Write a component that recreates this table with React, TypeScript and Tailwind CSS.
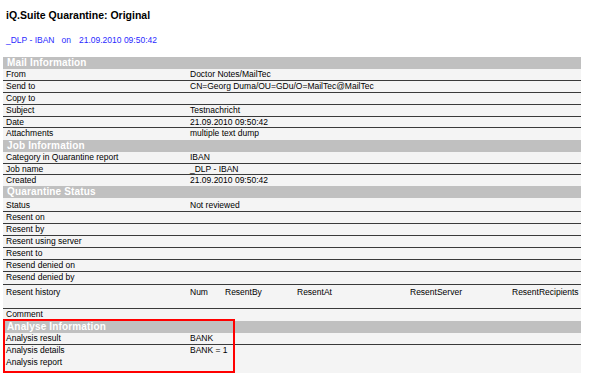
import React from "react";

type Row = { label: string; value?: string; border?: boolean; h?: string };

function Header({ title }: { title: string }) {
  return (
    <div className="h-[12px] bg-[#c0c0c0] pl-[4px] text-[10px] font-bold leading-[12px] tracking-[0.15px] text-white">
      {title}
    </div>
  );
}

function DataRow({ label, value, border = true, h = "h-[12px]" }: Row) {
  return (
    <div className={`flex ${h} ${border ? "border-b border-[#3a3a3a]" : ""}`}>
      <div className="w-[187px] shrink-0 pl-[3px] leading-[11px]">{label}</div>
      <div className="flex-1 leading-[11px]">{value}</div>
    </div>
  );
}

export default function App() {
  return (
    <div className="relative h-[373px] w-[600px] overflow-hidden bg-white font-['Liberation_Sans',Arial,sans-serif] text-black">
      <div className="pl-[6px] pt-[9px] text-[10.5px] font-bold leading-[12px]">iQ.Suite Quarantine: Original</div>
      <div className="flex pl-[6px] pt-[14px] text-[8.5px] leading-[11px] text-[#2a2aff]">
        <span>_DLP - IBAN</span>
        <span className="ml-[7px]">on</span>
        <span className="ml-[8px]">21.09.2010 09:50:42</span>
      </div>
      <div className="ml-[3px] mt-[11px] flex h-[320px] w-[578px] flex-col bg-[#f4f4f4] text-[8.5px]">
        <Header title="Mail Information" />
        <DataRow label="From" value="Doctor Notes/MailTec" />
        <DataRow label="Send to" value="CN=Georg Duma/OU=GDu/O=MailTec@MailTec" />
        <DataRow label="Copy to" />
        <DataRow label="Subject" value="Testnachricht" />
        <DataRow label="Date" value="21.09.2010 09:50:42" h="h-[11px]" />
        <DataRow label="Attachments" value="multiple text dump" border={false} />
        <Header title="Job Information" />
        <DataRow label="Category in Quarantine report" value="IBAN" />
        <DataRow label="Job name" value="_DLP - IBAN" h="h-[11px]" />
        <DataRow label="Created" value="21.09.2010 09:50:42" border={false} h="h-[11px]" />
        <Header title="Quarantine Status" />
        <div className="flex h-[14px] border-b border-[#3a3a3a]">
          <div className="w-[187px] shrink-0 pl-[3px] pt-[2px] leading-[11px]">Status</div>
          <div className="flex-1 pt-[2px] leading-[11px]">Not reviewed</div>
        </div>
        <DataRow label="Resent on" />
        <DataRow label="Resent by" />
        <DataRow label="Resent using server" />
        <DataRow label="Resent to" />
        <DataRow label="Resend denied on" />
        <DataRow label="Resend denied by" h="h-[13px]" />
        <div className="flex h-[24px] border-b border-[#3a3a3a]">
          <div className="w-[187px] shrink-0 pl-[3px] pt-[2px] leading-[11px]">Resent history</div>
          <div className="grid flex-1 grid-cols-[35px_72px_113px_102px_auto] pt-[2px] leading-[11px]">
            <span>Num</span>
            <span>ResentBy</span>
            <span>ResentAt</span>
            <span>ResentServer</span>
            <span>ResentRecipients</span>
          </div>
        </div>
        <DataRow label="Comment" border={false} />
        <Header title="Analyse Information" />
        <DataRow label="Analysis result" value="BANK" />
        <DataRow label="Analysis details" value="BANK = 1" border={false} />
        <DataRow label="Analysis report" border={false} />
      </div>
      <div className="absolute left-[3px] top-[319px] h-[54px] w-[232px] border-2 border-[#ff0000]" />
    </div>
  );
}
